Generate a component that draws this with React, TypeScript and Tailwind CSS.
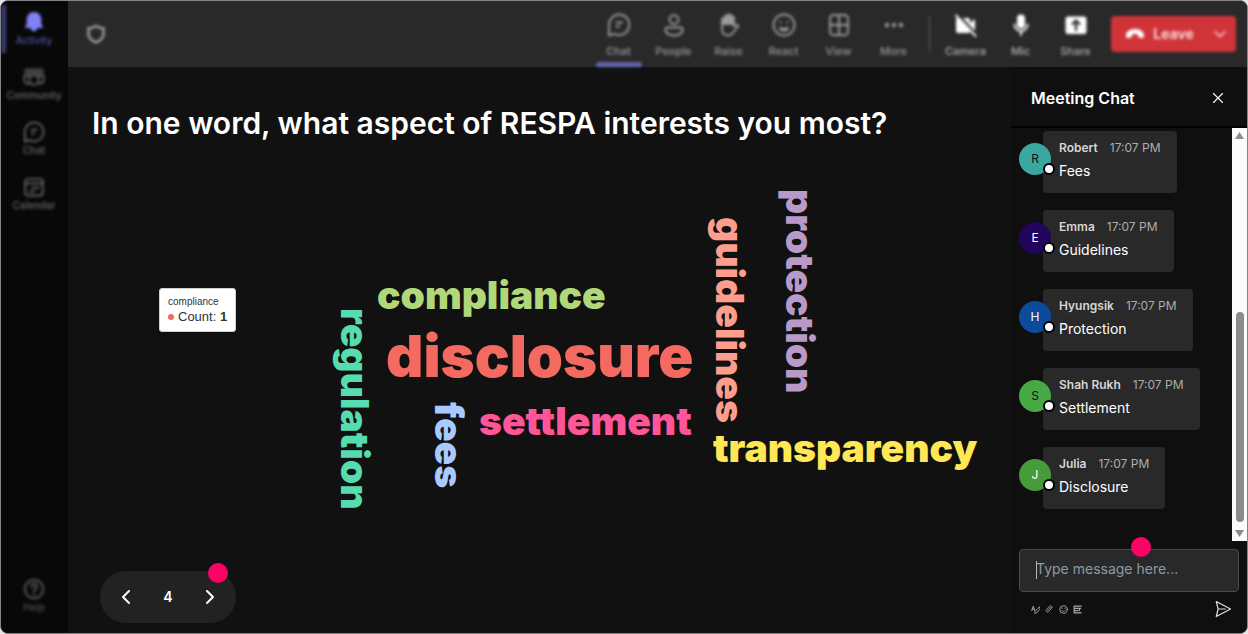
import type { ReactNode } from "react";
import { ChevronDown, ChevronLeft, ChevronRight, X } from "lucide-react";

const railItemStyle =
  "flex h-[55px] w-full flex-col items-center gap-px pt-1 text-[10px] font-medium leading-3 text-[#686868]";

const toolStyle =
  "flex h-full w-[55px] flex-col items-center gap-1.5 pt-3 text-[11px] font-medium leading-4";

const smallIconStyle = "flex h-3 w-3 items-center justify-center text-[#a8a8a8]";

type IconProps = { children: ReactNode; size?: number; width?: number };

function Icon({ children, size = 24, width = 1.9 }: IconProps) {
  return (
    <svg
      width={size}
      height={size}
      viewBox="0 0 24 24"
      fill="none"
      stroke="currentColor"
      strokeWidth={width}
      strokeLinecap="round"
      strokeLinejoin="round"
      aria-hidden="true"
    >
      {children}
    </svg>
  );
}

const chatShape = (
  <>
    <path d="M12 1.5a10.300 10.300 0 1 1-4.800 19.400L2 22.500V12A10.300 10.300 0 0 1 12 1.500z" />
    <path d="M9.500 9.500h5.500M9.500 13.500h2.500" />
  </>
);

const railItems = [
  {
    label: "Community",
    icon: (
      <>
        <path
          d="M3.500 2.500h17a2 2 0 0 1 2 2V9h-21V4.500a2 2 0 0 1 2-2z"
          fill="currentColor"
          fillOpacity="0.6"
          stroke="none"
        />
        <path d="M7 10.500h10v5a5 5 0 0 1-10 0zM7 10.500H1.500v4.500a4 4 0 0 0 5.500 4M17 10.500h5.500v4.500a4 4 0 0 1-5.500 4" />
      </>
    ),
  },
  { label: "Chat", icon: chatShape },
  {
    label: "Calendar",
    icon: (
      <>
        <rect x="2.500" y="3" width="19" height="18.500" rx="3" />
        <path d="M2.500 8h19M10 13h7M7 17h5" />
      </>
    ),
  },
];

const tools = [
  { label: "Chat", icon: chatShape },
  {
    label: "People",
    icon: (
      <>
        <circle cx="12" cy="6.500" r="4.500" />
        <path d="M5.500 14.500h13a2.200 2.200 0 0 1 2.200 2.200c0 3.500-4 5.800-8.700 5.800s-8.700-2.300-8.700-5.800a2.200 2.200 0 0 1 2.200-2.200z" />
      </>
    ),
  },
  {
    label: "Raise",
    icon: (
      <>
        <path
          d="M5 11V6.500a1.500 1.500 0 0 1 3 0V4a1.500 1.500 0 0 1 3 0V2.800a1.500 1.500 0 0 1 3 0V5a1.500 1.500 0 0 1 3 0v6z"
          fill="currentColor"
        />
        <path d="M5 10v5c0 5 2.500 7.500 6 7.500 3 0 4.500-1.500 6-4l4.500-5.500c-1.500-1.500-3-1-4.500.500V9" />
      </>
    ),
  },
  {
    label: "React",
    icon: (
      <>
        <circle cx="12" cy="12" r="10.500" />
        <path d="M7.500 15.500c2.500 3 6.500 3 9 0zM8.500 9v.500M15.500 9v.500" />
      </>
    ),
  },
  {
    label: "View",
    icon: (
      <>
        <rect x="3" y="2" width="18" height="20" rx="3.500" />
        <path d="M12 2v20M3 12h18" />
      </>
    ),
  },
  {
    label: "More",
    icon: (
      <g fill="currentColor" stroke="none">
        <circle cx="5" cy="12" r="2.200" />
        <circle cx="12" cy="12" r="2.200" />
        <circle cx="19" cy="12" r="2.200" />
      </g>
    ),
  },
];

const deviceTools = [
  {
    label: "Camera",
    icon: (
      <>
        <path
          d="M4 5h10a2 2 0 0 1 2 2v3l5-4v12l-5-4v4a2 2 0 0 1-2 2H4a2 2 0 0 1-2-2V7a2 2 0 0 1 2-2z"
          fill="currentColor"
          stroke="none"
        />
        <path d="M4 1.500 23 22" stroke="#292929" strokeWidth="2.500" />
        <path d="M2 2.500 21.500 23" />
      </>
    ),
  },
  {
    label: "Mic",
    icon: (
      <>
        <rect x="8" y="1.500" width="8" height="14" rx="4" fill="currentColor" stroke="none" />
        <path d="M5.500 11.500a6.500 6.500 0 0 0 13 0M12 18v4" />
      </>
    ),
  },
  {
    label: "Share",
    icon: (
      <>
        <rect x="1.500" y="3.500" width="21" height="17.500" rx="2.500" fill="currentColor" stroke="none" />
        <path d="M12 17V8M8.500 11 12 7.500l3.500 3.500" stroke="#292929" strokeWidth="2.200" />
      </>
    ),
  },
];

const words = [
  { text: "compliance", style: "left-[309px] top-[132px] text-[39px]/[39px] text-[#b0d87a]" },
  { text: "disclosure", style: "left-[318px] top-[184px] text-[58px]/[58px] text-[#f46a60]" },
  { text: "settlement", style: "left-[411px] top-[258px] text-[39px]/[39px] text-[#ff5599]" },
  { text: "transparency", style: "left-[645px] top-[285px] text-[39px]/[39px] text-[#ffe755]" },
  {
    text: "regulation",
    style: "left-[268px] top-[165px] text-[39px]/[39px] text-[#56dcaf] [writing-mode:vertical-rl]",
  },
  {
    text: "fees",
    style: "left-[362px] top-[259px] text-[39px]/[39px] text-[#a9caff] [writing-mode:vertical-rl]",
  },
  {
    text: "guidelines",
    style: "left-[643px] top-[74px] text-[39px]/[39px] text-[#ff9d8c] [writing-mode:vertical-rl]",
  },
  {
    text: "protection",
    style: "left-[713px] top-[46px] text-[39px]/[39px] text-[#b899c8] [writing-mode:vertical-rl]",
  },
];

const messages = [
  { name: "Robert", text: "Fees", avatar: "bg-[#3aa8a0] text-[#111111]" },
  { name: "Emma", text: "Guidelines", avatar: "bg-[#22045c] text-white" },
  { name: "Hyungsik", text: "Protection", avatar: "bg-[#0c4a9c] text-white" },
  { name: "Shah Rukh", text: "Settlement", avatar: "bg-[#48a846] text-[#111111]" },
  { name: "Julia", text: "Disclosure", avatar: "bg-[#469c38] text-white" },
];

function Sidebar() {
  return (
    <nav className="flex w-[67px] shrink-0 flex-col bg-[#080808] pr-px pt-1">
      <div className="flex flex-1 flex-col blur-[0.1rem]">
        <button type="button" className="relative flex h-[57px] w-full flex-col items-center gap-px pt-1.5 text-[10px] font-medium leading-3 text-[#5355a8]">
          <span className="absolute left-0 top-0 h-12 w-[5px] bg-[#383a74]" />
          <svg width="22" height="22" viewBox="0 0 24 24" fill="#8083f6" aria-hidden="true">
            <path d="M12 1a8 8 0 0 0-8 8v5l-2 4.500h6.500a3.500 3.500 0 0 0 7 0H22L20 14V9a8 8 0 0 0-8-8z" />
          </svg>
          Activity
        </button>
        {railItems.map((item) => (
          <button key={item.label} type="button" className={railItemStyle}>
            <Icon size={22}>{item.icon}</Icon>
            {item.label}
          </button>
        ))}
        <button type="button" className="mt-auto flex flex-col items-center gap-px pb-5 text-[10px] font-medium leading-3 text-[#505050]">
          <Icon size={22} width={2.5}>
            <circle cx="12" cy="12" r="10" />
            <path d="M9 9.500a3 3 0 1 1 4 2.800c-.7.300-1 .7-1 1.700M12 17v.500" />
          </Icon>
          Help
        </button>
      </div>
    </nav>
  );
}

function Toolbar() {
  return (
    <header className="flex h-[66px] items-center bg-[#292929]">
      <div className="flex h-full min-w-0 flex-1 items-center pl-[18px] pr-[11px] blur-[0.1rem]">
        <span className="text-[#a0a0a0]">
          <Icon size={20} width={3}>
            <path d="M12 2.500c3 2 5.500 2.500 9 2.500v7c0 5-4 8-9 10-5-2-9-5-9-10V5c3.500 0 6-.5 9-2.500z" />
          </Icon>
        </span>
        <div className="ml-auto flex h-full text-[#9a9a9a]">
          {tools.map((tool, index) => (
            <button key={tool.label} type="button" className={`${toolStyle} relative`}>
              <Icon>{tool.icon}</Icon>
              {tool.label}
              {index === 0 && <span className="absolute bottom-0 h-[5px] w-[46px] rounded-sm bg-[#6264b0]" />}
            </button>
          ))}
        </div>
        <span className="mx-2 h-9 w-px bg-[#606060]" />
        <div className="flex h-full text-[#b0b0b0]">
          {deviceTools.map((tool) => (
            <button key={tool.label} type="button" className={toolStyle}>
              <span className="text-white">
                <Icon>{tool.icon}</Icon>
              </span>
              {tool.label}
            </button>
          ))}
        </div>
        <div className="ml-2 flex h-9 w-[125px] shrink-0 items-center rounded-sm bg-[#d13438] text-sm font-semibold text-[#fbe6e6]">
          <button type="button" className="flex h-full flex-1 items-center justify-center gap-2 pl-1">
            <svg width="20" height="12" viewBox="0 0 20 12" fill="#ffffff" aria-hidden="true">
              <path d="M10 1C5 1 1 3.500 1 7.500c0 2 .8 2.800 2.500 2.500l2-.4c1-.2 1.500-.8 1.500-1.800V6.500c2-.7 4-.7 6 0v1.300c0 1 .5 1.600 1.500 1.800l2 .4c1.700.3 2.500-.5 2.500-2.500C19 3.500 15 1 10 1z" />
            </svg>
            Leave
          </button>
          <button type="button" aria-label="Leave options" className="flex h-full w-8 items-center justify-center">
            <ChevronDown size={20} strokeWidth={1.5} />
          </button>
        </div>
      </div>
    </header>
  );
}

function WordCloud() {
  return (
    <div className="relative min-h-[410px] flex-1">
      {words.map((word) => (
        <span key={word.text} className={`absolute whitespace-nowrap font-black ${word.style}`}>
          {word.text}
        </span>
      ))}
      <div className="absolute left-[91px] top-[145px] rounded-[3px] border border-[#d0d0d0] bg-white px-2 py-1.5 font-['Liberation_Sans',sans-serif] text-[#333333] shadow">
        <p className="text-[10px] leading-[14px]">compliance</p>
        <p className="flex items-center text-[13px] leading-4">
          <span className="mr-1 h-1.5 w-1.5 rounded-full bg-[#f46a60]" />
          Count:&nbsp;<b>1</b>
        </p>
      </div>
    </div>
  );
}

function ChatPanel() {
  return (
    <aside className="flex w-[236px] shrink-0 flex-col bg-[#0f0f0f]">
      <div className="flex h-[61px] items-center justify-between border-b-2 border-black px-5 pt-0.5">
        <h2 className="text-base font-semibold">Meeting Chat</h2>
        <button type="button" aria-label="Close chat">
          <X size={18} strokeWidth={1.5} />
        </button>
      </div>
      <div className="flex flex-1">
        <ul className="flex min-w-0 flex-1 flex-col gap-[17px] pl-2 pt-[3px]">
          {messages.map((message) => (
            <li key={message.name} className="flex items-start">
              <div
                className={`relative z-10 -mr-2 mt-3 flex h-8 w-8 shrink-0 items-center justify-center rounded-full text-xs ${message.avatar}`}
              >
                {message.name[0]}
                <span className="absolute bottom-0 -right-1 h-3 w-3 rounded-full border-2 border-black bg-white" />
              </div>
              <div className="rounded bg-[#292929] px-4 py-2">
                <p className="flex gap-3 whitespace-nowrap text-xs leading-[18px]">
                  <span className="font-semibold text-[#d6d6d6]">{message.name}</span>
                  <span className="text-[#adadad]">17:07 PM</span>
                </p>
                <p className="text-sm leading-7">{message.text}</p>
              </div>
            </li>
          ))}
        </ul>
        <div className="flex w-[15px] flex-col items-center justify-between bg-[#fcfcfc] py-1 text-[#8b8b8b]">
          <svg width="9" height="7" viewBox="0 0 9 7" fill="currentColor" aria-hidden="true">
            <path d="M4.500 0 9 7H0z" />
          </svg>
          <span className="mb-2 mt-auto h-[210px] w-2 rounded-full bg-[#8b8b8b]" />
          <svg width="9" height="7" viewBox="0 0 9 7" fill="currentColor" aria-hidden="true">
            <path d="M0 0h9L4.500 7z" />
          </svg>
        </div>
      </div>
      <form className="px-2 pb-[15px] pt-2" onSubmit={(e) => e.preventDefault()}>
        <div className="relative">
          <input
            type="text"
            aria-label="Message"
            placeholder="Type message here..."
            className="h-[43px] w-full rounded border border-[#4a4a4a] bg-[#292929] px-4 pb-1 text-sm text-white outline-none placeholder:text-[#8d99a6]"
          />
          <span className="absolute left-[17px] top-3 h-[18px] w-px bg-[#b5b5b5]" />
          <span className="absolute -top-3 left-[112px] h-5 w-5 rounded-full bg-[#ff0066]" />
        </div>
        <div className="mt-2 flex items-center gap-0.5 pl-2.5 pr-[7px]">
          <button type="button" aria-label="Format" className={smallIconStyle}>
            <Icon size={9} width={2.5}>
              <path d="M2 15 6 3l4 12M3 11h6M22 6 11 17l-1 5 5-1L23 12c2-4 1-6-1-6z" />
            </Icon>
          </button>
          <button type="button" aria-label="Attach" className={smallIconStyle}>
            <Icon size={8} width={2.5}>
              <path d="m20 9-9 11c-5 4-10-1-7-6L13 4c5-4 10 1 7 5zM8 16l8-9" />
            </Icon>
          </button>
          <button type="button" aria-label="Emoji" className={smallIconStyle}>
            <Icon size={9} width={2.5}>
              <circle cx="12" cy="12" r="10" />
              <path d="M8 15c2 3 6 3 8 0M8 8v1M16 8v1" />
            </Icon>
          </button>
          <button type="button" aria-label="Actions" className={smallIconStyle}>
            <Icon size={9} width={3}>
              <path d="M22 3H3v18h19M4 9h16M4 15h9M17 9v6" />
            </Icon>
          </button>
          <button type="submit" aria-label="Send" className="ml-auto text-[#e0e0e0]">
            <Icon size={18} width={1.6}>
              <path d="m3 2 19 10L3 22l2.500-10zM5.500 12H15" />
            </Icon>
          </button>
        </div>
      </form>
    </aside>
  );
}

export default function App() {
  return (
    <div className="min-h-screen bg-[#e6e6e6] font-[Inter,sans-serif] text-white">
      <div className="flex min-h-screen overflow-hidden rounded-lg border border-[#858585] bg-[#111111]">
        <Sidebar />
        <div className="flex min-w-0 flex-1 flex-col">
          <Toolbar />
          <div className="flex flex-1">
            <main className="flex min-w-0 flex-1 flex-col">
              <h1 className="px-6 pt-9 text-3xl/10 font-semibold">
                In one word, what aspect of RESPA interests you most?
              </h1>
              <WordCloud />
              <div className="mb-2.5 ml-8 flex">
                <div className="relative flex h-[52px] w-[136px] items-center justify-between rounded-full bg-[#222222] px-3.5">
                  <button type="button" aria-label="Previous slide">
                    <ChevronLeft size={24} />
                  </button>
                  <span className="text-sm font-semibold">4</span>
                  <button type="button" aria-label="Next slide">
                    <ChevronRight size={24} />
                  </button>
                  <span className="absolute -top-2 right-2 h-5 w-5 rounded-full bg-[#ff0066]" />
                </div>
              </div>
            </main>
            <ChatPanel />
          </div>
        </div>
      </div>
    </div>
  );
}
